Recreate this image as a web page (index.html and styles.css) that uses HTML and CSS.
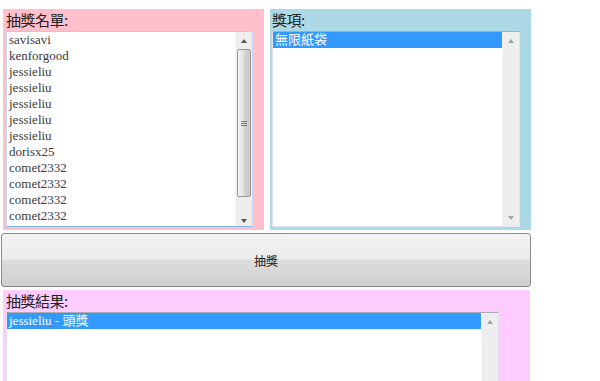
FILE: index.html
```html
<!DOCTYPE html>
<html>
<head>
<meta charset="utf-8">
<link rel="stylesheet" href="styles.css">
</head>
<body>
<div class="page">
  <div class="row">
    <section class="panel pink">
      <div class="label">抽獎名單:</div>
      <div class="listbox lb-names focus">
        <ul class="items">
          <li>savisavi</li>
          <li>kenforgood</li>
          <li>jessieliu</li>
          <li>jessieliu</li>
          <li>jessieliu</li>
          <li>jessieliu</li>
          <li>jessieliu</li>
          <li>dorisx25</li>
          <li>comet2332</li>
          <li>comet2332</li>
          <li>comet2332</li>
          <li>comet2332</li>
        </ul>
        <div class="sb">
          <span class="arr up"></span>
          <div class="track"><div class="thumb"><span class="grip"></span></div></div>
          <span class="arr down"></span>
        </div>
      </div>
    </section>
    <section class="panel blue">
      <div class="label">獎項:</div>
      <div class="listbox lb-prizes">
        <ul class="items">
          <li class="sel">無限紙袋</li>
        </ul>
        <div class="sb off">
          <span class="arr up"></span>
          <div class="track"></div>
          <span class="arr down"></span>
        </div>
      </div>
    </section>
  </div>
  <button class="draw" type="button">抽獎</button>
  <section class="panel result">
    <div class="label">抽獎結果:</div>
    <div class="listbox lb-result">
      <ul class="items">
        <li class="sel">jessieliu - 頭獎</li>
      </ul>
      <div class="sb off">
        <span class="arr up"></span>
        <div class="track"></div>
        <span class="arr down"></span>
      </div>
    </div>
  </section>
</div>
</body>
</html>
```

FILE: styles.css
```css
html, body {
  margin: 0;
  padding: 0;
  background: #ffffff;
  overflow: hidden;
}

.page {
  padding-top: 9px;
  display: flex;
  flex-direction: column;
  align-items: flex-start;
}

.row {
  display: flex;
  gap: 6px;
  margin-left: 3px;
}

.panel {
  box-sizing: border-box;
  display: flex;
  flex-direction: column;
  align-items: flex-start;
}

.pink {
  background: #ffc0cb;
  width: 261px;
  height: 221px;
  padding-left: 3px;
}

.blue {
  background: #add8e6;
  width: 261px;
  height: 221px;
  padding-left: 2px;
}

.result {
  background: #ffccff;
  width: 527px;
  height: 91px;
  overflow: hidden;
  margin-top: 3px;
  margin-left: 3px;
  padding-left: 3px;
}

.label {
  font-family: "Noto Sans CJK TC", "Microsoft JhengHei", sans-serif;
  font-size: 15px;
  line-height: 22px;
  height: 22px;
  color: #222;
  letter-spacing: -0.5px;
}

.listbox {
  box-sizing: border-box;
  display: flex;
  flex: none;
  background: #fff;
  border: 1px solid #e2e3ea;
  border-top-color: #abadb3;
  border-bottom-color: #e3e9ef;
}

.listbox.focus {
  border-color: #c5daed;
  border-top-color: #b5cfe7;
  border-bottom-color: #7eb4ea;
}

.lb-names { width: 247px; height: 196px; }
.lb-prizes { width: 248px; height: 196px; }
.lb-result { width: 493px; height: 100px; }

.items {
  list-style: none;
  margin: 0;
  padding: 0;
  flex: 1;
  overflow: hidden;
  font-family: "Liberation Serif", "Noto Sans CJK TC", serif;
  font-size: 13px;
  line-height: 16px;
  color: #3a3a3a;
}

.items li {
  padding-left: 2px;
  height: 16px;
  white-space: nowrap;
}

.items li.sel {
  background: #3399ff;
  color: #fff;
}

.sb {
  width: 16px;
  flex: none;
  display: flex;
  flex-direction: column;
  background: #eeeeee;
  border-left: 1px solid #f6f6f6;
}

.arr {
  height: 17px;
  flex: none;
  display: flex;
  align-items: center;
  justify-content: center;
}

.arr::before {
  content: "";
  width: 0;
  height: 0;
  border-left: 3px solid transparent;
  border-right: 3px solid transparent;
}

.arr.up::before { border-bottom: 4px solid #555; }
.arr.down::before { border-top: 4px solid #555; }
.sb.off .arr.up::before { border-bottom-color: #a3a3a3; }
.sb.off .arr.down::before { border-top-color: #a3a3a3; }

.track {
  flex: 1;
  display: flex;
  flex-direction: column;
  padding: 0 1px 15px 1px;
}

.thumb {
  box-sizing: border-box;
  height: 148px;
  border: 1px solid #979797;
  border-radius: 2px;
  background: linear-gradient(to right, #f4f4f4 0%, #e3e3e3 45%, #d2d2d2 55%, #c8c8c8 100%);
  display: flex;
  align-items: center;
  justify-content: center;
}

.grip {
  width: 6px;
  height: 5px;
  background: repeating-linear-gradient(to bottom, #777 0, #777 1px, transparent 1px, transparent 2px);
}

.draw {
  box-sizing: border-box;
  margin: 3px 0 0 1px;
  width: 530px;
  height: 54px;
  padding: 0;
  border: 1px solid #8a8a8a;
  border-radius: 3px;
  background: linear-gradient(to bottom, #f3f3f3 0%, #ebebeb 48%, #dddddd 50%, #cfcfcf 100%);
  font-family: "Noto Sans CJK TC", "Microsoft JhengHei", sans-serif;
  font-size: 12px;
  color: #222;
}
```
